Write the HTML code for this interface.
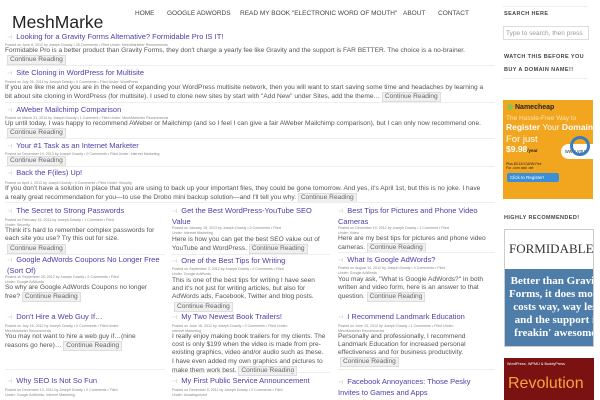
<!DOCTYPE html>
<html><head><meta charset="utf-8"><style>
*{margin:0;padding:0;box-sizing:border-box}
body{width:600px;height:400px;overflow:hidden;background:#fff;font-family:"Liberation Sans",sans-serif;position:relative;color:#555}
.a{position:absolute;white-space:nowrap}
.nav{font-size:6.5px;color:#444;top:10px}
.t{font-size:7.5px;color:#4a3fa8}
.b{font-size:6px;color:#bbb;margin-right:4px}
.m{font-size:3.6px;color:#888}
.x{font-size:6.6px;color:#555;line-height:8.2px}
.btn{display:inline-block;background:#f0f0f0;border:1px solid #ddd;color:#666;font-size:6.6px;padding:0 2px;line-height:8px}
.sep{position:absolute;height:1px;background:#eee}
.sh{font-size:5.5px;color:#444;letter-spacing:.4px;font-weight:bold}
</style></head><body>
<div class="a" style="left:12px;top:12px;font-size:17.5px;color:#222;width:91px;overflow:hidden">MeshMarketer</div>
<div class="a nav" style="left:135px">HOME</div>
<div class="a nav" style="left:167px">GOOGLE ADWORDS</div>
<div class="a nav" style="left:240px">READ MY BOOK "ELECTRONIC WORD OF MOUTH"</div>
<div class="a nav" style="left:403px">ABOUT</div>
<div class="a nav" style="left:438px">CONTACT</div>

<div class="a t" style="left:7px;top:32px"><span class="b">⊣</span>Looking for a Gravity Forms Alternative? Formidable Pro IS IT!</div>
<div class="a m" style="left:5px;top:43px">Posted on June 8, 2012 by Joseph Dowdy • 28 Comments • Filed Under: MeshMarketer Recommends</div>
<div class="a x" style="left:5px;top:47px">Formidable Pro is a better product than Gravity Forms, they don't charge a yearly fee like Gravity and the support is FAR BETTER. The choice is a no-brainer.</div>
<div class="a btn" style="left:7px;top:55px">Continue Reading</div>
<div class="sep" style="left:5px;top:65px;width:490px"></div>

<div class="a t" style="left:7px;top:68px"><span class="b">⊣</span>Site Cloning in WordPress for Multisite</div>
<div class="a m" style="left:5px;top:80px">Posted on July 26, 2014 by Joseph Dowdy • 0 Comments • Filed Under: WordPress</div>
<div class="a x" style="left:5px;top:84px">If you are like me and you are in the need of expanding your WordPress multisite network, then you will want to start saving some time and headaches by learning a<br>bit about site cloning in WordPress (for multisite). I used to clone new sites by start with "Add New" under Sites, add the theme… <span class="btn">Continue Reading</span></div>
<div class="sep" style="left:5px;top:102px;width:490px"></div>

<div class="a t" style="left:7px;top:105px"><span class="b">⊣</span>AWeber Mailchimp Comparison</div>
<div class="a m" style="left:5px;top:116px">Posted on March 31, 2014 by Joseph Dowdy • 1 Comment • Filed Under: MeshMarketer Recommends</div>
<div class="a x" style="left:5px;top:120px">Up until today, I was happy to recommend AWeber or Mailchimp (and so I feel I can give a fair AWeber Mailchimp comparison), but I can only now recommend one.</div>
<div class="a btn" style="left:7px;top:128px">Continue Reading</div>
<div class="sep" style="left:5px;top:138px;width:490px"></div>

<div class="a t" style="left:7px;top:141px"><span class="b">⊣</span>Your #1 Task as an Internet Marketer</div>
<div class="a m" style="left:5px;top:152px">Posted on December 19, 2013 by Joseph Dowdy • 0 Comments • Filed Under: Internet Marketing</div>
<div class="a btn" style="left:7px;top:156px">Continue Reading</div>
<div class="sep" style="left:5px;top:166px;width:490px"></div>

<div class="a t" style="left:7px;top:168px"><span class="b">⊣</span>Back the F(iles) Up!</div>
<div class="a m" style="left:5px;top:181px">Posted on April 1, 2013 by Joseph Dowdy • 0 Comments • Filed Under: Security</div>
<div class="a x" style="left:5px;top:185px">If you don't have a solution in place that you are using to back up your important files, they could be gone tomorrow. And yes, it's April 1st, but this is no joke. I have<br>a really great recommendation for you—to use the Drobo mini backup solution—and I'll tell you why. <span class="btn">Continue Reading</span></div>
<div class="sep" style="left:5px;top:202px;width:490px"></div>

<!-- col1 -->
<div class="a t" style="left:7px;top:206px"><span class="b">⊣</span>The Secret to Strong Passwords</div>
<div class="a m" style="left:5px;top:218px;line-height:5px">Posted on February 15, 2013 by Joseph Dowdy • 1 Comment • Filed<br>Under: Security</div>
<div class="a x" style="left:5px;top:227px">Think it's hard to remember complex passwords for<br>each site you use? Try this out for size.</div>
<div class="a btn" style="left:7px;top:244px">Continue Reading</div>
<div class="a t" style="left:7px;top:255px;line-height:9px"><span class="b">⊣</span>Google AdWords Coupons No Longer Free<br>(Sort Of)</div>
<div class="a m" style="left:5px;top:275px;line-height:5px">Posted on September 25, 2012 by Joseph Dowdy • 2 Comments • Filed<br>Under: Google AdWords</div>
<div class="a x" style="left:5px;top:284px">So why are Google AdWords Coupons no longer<br>free? <span class="btn">Continue Reading</span></div>
<div class="a t" style="left:7px;top:312px"><span class="b">⊣</span>Don't Hire a Web Guy If…</div>
<div class="a m" style="left:5px;top:324px;line-height:5px">Posted on July 16, 2012 by Joseph Dowdy • 0 Comments • Filed Under:<br>MeshMarketer Recommends</div>
<div class="a x" style="left:5px;top:333px">You may not want to hire a web guy if…(nine<br>reasons go here)… <span class="btn">Continue Reading</span></div>
<div class="a t" style="left:7px;top:376px"><span class="b">⊣</span>Why SEO Is Not So Fun</div>
<div class="a m" style="left:5px;top:388px;line-height:5px">Posted on December 13, 2011 by Joseph Dowdy • 0 Comments • Filed<br>Under: Google AdWords, Internet Marketing</div>

<!-- col2 -->
<div class="a t" style="left:172px;top:206px;line-height:9px"><span class="b">⊣</span>Get the Best WordPress-YouTube SEO<br>Value</div>
<div class="a m" style="left:172px;top:226px;line-height:5px">Posted on January 18, 2013 by Joseph Dowdy • 0 Comments • Filed<br>Under: Internet Marketing</div>
<div class="a x" style="left:172px;top:236px">Here is how you can get the best SEO value out of<br>YouTube and WordPress. <span class="btn">Continue Reading</span></div>
<div class="a t" style="left:172px;top:256px"><span class="b">⊣</span>One of the Best Tips for Writing</div>
<div class="a m" style="left:172px;top:267px;line-height:5px">Posted on September 3, 2012 by Joseph Dowdy • 0 Comments • Filed<br>Under: Google AdWords</div>
<div class="a x" style="left:172px;top:277px">This is one of the best tips for writing I have seen<br>and it's not just for writing articles, but also for<br>AdWords ads, Facebook, Twitter and blog posts.</div>
<div class="a btn" style="left:174px;top:302px">Continue Reading</div>
<div class="a t" style="left:172px;top:312px"><span class="b">⊣</span>My Two Newest Book Trailers!</div>
<div class="a m" style="left:172px;top:324px;line-height:5px">Posted on June 18, 2012 by Joseph Dowdy • 0 Comments • Filed Under:<br>Internet Marketing</div>
<div class="a x" style="left:172px;top:333px">I really enjoy making book trailers for my clients. The<br>cost is only $199 when the video is made from pre-<br>existing graphics, video and/or audio such as these.<br>I have even added my own graphics and pictures to<br>make them work best. <span class="btn">Continue Reading</span></div>
<div class="a t" style="left:172px;top:376px"><span class="b">⊣</span>My First Public Service Announcement</div>
<div class="a m" style="left:172px;top:388px;line-height:5px">Posted on December 5, 2011 by Joseph Dowdy • 0 Comments • Filed<br>Under: Uncategorized</div>

<!-- col3 -->
<div class="a t" style="left:338px;top:206px;line-height:9px"><span class="b">⊣</span>Best Tips for Pictures and Phone Video<br>Cameras</div>
<div class="a m" style="left:338px;top:226px;line-height:5px">Posted on December 19, 2012 by Joseph Dowdy • 1 Comment • Filed<br>Under: Video</div>
<div class="a x" style="left:338px;top:235px">Here are my best tips for pictures and phone video<br>cameras. <span class="btn">Continue Reading</span></div>
<div class="a t" style="left:338px;top:255px"><span class="b">⊣</span>What Is Google AdWords?</div>
<div class="a m" style="left:338px;top:266px;line-height:5px">Posted on August 14, 2012 by Joseph Dowdy • 0 Comments • Filed<br>Under: Google AdWords</div>
<div class="a x" style="left:338px;top:276px">You may ask, "What is Google AdWords?" In both<br>written and video form, here is an answer to that<br>question. <span class="btn">Continue Reading</span></div>
<div class="a t" style="left:338px;top:312px"><span class="b">⊣</span>I Recommend Landmark Education</div>
<div class="a m" style="left:338px;top:324px;line-height:5px">Posted on June 15, 2012 by Joseph Dowdy • 1 Comments • Filed Under:<br>MeshMarketer Recommends</div>
<div class="a x" style="left:338px;top:333px">Personally and professionally, I recommend<br>Landmark Education for increased personal<br>effectiveness and for business productivity.</div>
<div class="a btn" style="left:340px;top:357px">Continue Reading</div>
<div class="a t" style="left:338px;top:377px;line-height:9px"><span class="b">⊣</span>Facebook Annoyances: Those Pesky<br>Invites to Games and Apps</div>

<div class="sep" style="left:5px;top:254px;width:160px"></div>
<div class="sep" style="left:172px;top:254px;width:158px"></div>
<div class="sep" style="left:338px;top:252px;width:157px"></div>
<div class="sep" style="left:5px;top:369px;width:160px"></div>
<div class="sep" style="left:172px;top:372px;width:158px"></div>
<div class="sep" style="left:338px;top:369px;width:157px"></div>

<!-- sidebar -->
<div class="sep" style="left:503px;top:6px;width:85px"></div>
<div class="a sh" style="left:504px;top:11px">SEARCH HERE</div>
<div class="a" style="left:503px;top:26px;width:86px;height:14px;border:1px solid #ddd;font-size:6.5px;color:#999;padding:3px 2px;overflow:hidden">Type to search, then press</div>
<div class="a sh" style="left:504px;top:54px">WATCH THIS BEFORE YOU</div>
<div class="a sh" style="left:504px;top:67px">BUY A DOMAIN NAME!!</div>
<div class="sep" style="left:503px;top:78px;width:85px"></div>
<div class="a" style="left:503px;top:100px;width:90px;height:99px;background:#f2a51f;overflow:hidden">
 <div class="a" style="left:4px;top:4px;width:6px;height:6px;border-radius:50%;background:#8bc34a"></div>
 <div class="a" style="left:12px;top:4px;font-size:7px;font-weight:bold;color:#222">Namecheap</div>
 <div class="a" style="left:3px;top:15px;font-size:6.5px;color:#fde6b0">The Hassle-Free Way to</div>
 <div class="a" style="left:3px;top:22px;font-size:8.5px;font-weight:bold;color:#fff">Register <span style="font-weight:normal">Your</span> Domain</div>
 <div class="a" style="left:3px;top:34px;font-size:9.5px;color:#fff">For just</div>
 <div class="a" style="left:3px;top:44px;font-size:8.5px;font-weight:bold;color:#fff">$9.98<span style="font-size:4.5px;color:#222">/year</span></div>
 <div class="a" style="left:58px;top:44px;width:40px;height:15px;border-radius:8px;background:#fff;font-size:5px;color:#333;padding:5px 4px">www.your</div>
 <div class="a" style="left:67px;top:36px;width:20px;height:20px;border:3px solid #3a7cc4;border-radius:50%"></div>
 <div class="a" style="left:3px;top:62px;font-size:3.5px;color:#222;line-height:4px">Plus $0.18 ICANN Fee<br>For .com and .net</div>
 <div class="a" style="left:4px;top:73px;width:52px;height:9px;background:#3a8fd6;border-radius:2px;font-size:4.5px;color:#fff;padding:2px 3px">Click to Register!</div>
</div>
<div class="a sh" style="left:504px;top:215px">HIGHLY RECOMMENDED!</div>
<div class="a" style="left:504px;top:229px;width:90px;height:118px;border:1px solid #ccc;overflow:hidden;font-family:'Liberation Serif',serif">
 <div class="a" style="left:4px;top:11px;font-size:13px;color:#333">FORMIDABLE</div>
 <div class="a" style="left:0;top:39px;width:100px;height:80px;background:#4d7da8;color:#fff;font-weight:bold;font-size:11px;line-height:13px;text-align:center;padding:6px 0 0 0;margin-left:-3px;width:110px">Better than Gravity<br>Forms, it does more,<br>costs way, way less<br>and the support is<br>freakin' awesome!</div>
</div>
<div class="a" style="left:504px;top:358px;width:90px;height:42px;background:#7a1212;overflow:hidden">
 <div class="a" style="left:3px;top:4px;font-size:3.8px;color:#fff">WordPress, WPMU &amp; BuddyPress</div>
 <div class="a" style="left:4px;top:17px;font-size:16px;color:#f7a43a">Revolution</div>
</div>
</body></html>
